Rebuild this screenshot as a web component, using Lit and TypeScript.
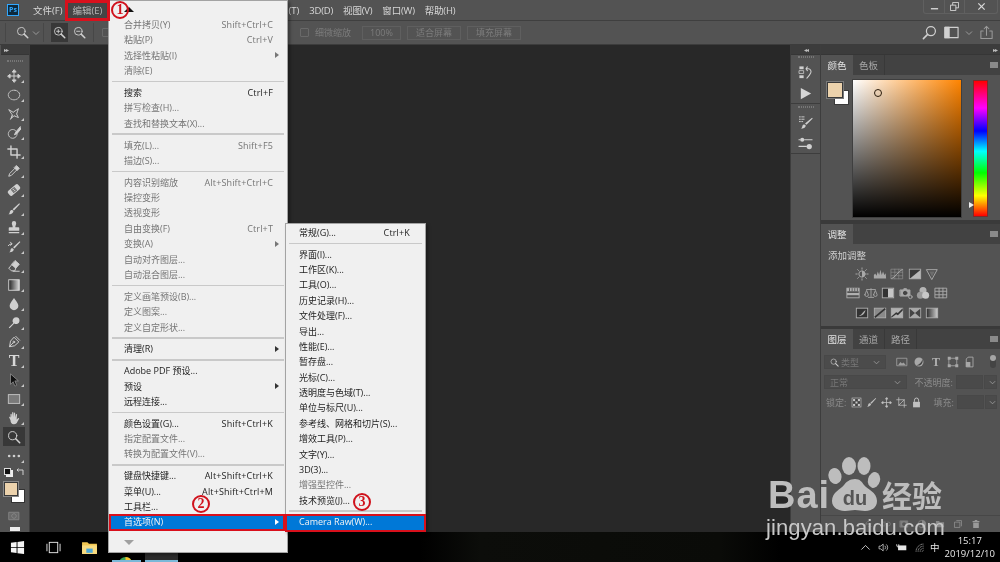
import { LitElement, html, css } from "lit";
import { customElement } from "lit/decorators.js";
import { unsafeSVG } from "lit/directives/unsafe-svg.js";

const s = (inner: string, vb = 16) => `<svg viewBox="0 0 ${vb} ${vb}" width="100%" height="100%" fill="none" stroke="#d0d0d0" stroke-width="1.1" stroke-linecap="round" stroke-linejoin="round">${inner}</svg>`;
const ICONS: Record<string, string> = {
  move: s(`<path d="M8 2v12M2 8h12"/><path fill="#d0d0d0" d="M8 1 6 3.5h4zM8 15l-2-2.5h4zM1 8l2.5-2v4zM15 8l-2.5-2v4z"/>`),
  marquee: s(`<ellipse cx="8" cy="8" rx="6.5" ry="5.5" stroke-dasharray="1.6 1.2"/>`),
  lasso: s(`<path d="M2 3l5 3 6-4-2 6 2 4-5-2-3 3 1-4z" stroke-dasharray="2.5 .8"/><path d="M6 10l-2 4"/>`),
  quick: s(`<circle cx="6.5" cy="9" r="5" stroke-dasharray="1.6 1.1"/><path fill="#d0d0d0" d="M15 1l-5 6-1.5 3 3-1.4 5-6z"/>`),
  crop: s(`<path stroke-width="1.6" d="M4.5 1v10.5H15M1 4.500h10.500V15"/>`),
  dropper: s(`<path fill="#d0d0d0" d="M11 2l3 3-2.500 2.500-3-3z"/><path d="M9 5L3 11l-1 3 3-1 6-6"/>`),
  heal: s(`<g transform="rotate(-40 8 8)"><rect x=".5" y="4.500" width="15" height="7" rx="2" fill="#d0d0d0" stroke="none"/><rect x="5.500" y="5.500" width="5" height="5" fill="#555" stroke="none"/><path d="M7 7h2M7 9h2"/></g>`),
  brush: s(`<path fill="#d0d0d0" stroke="none" d="M14 1.500l.8.8L8 9.800 6.400 8.200zM5.500 9c1.600 0 2.200 1.200 1.600 2.400C6.300 13.300 3.600 14.400 1.600 14c1.400-.9 1.400-2 1.700-3.200C3.600 9.700 4.500 9 5.500 9z"/>`),
  stamp: s(`<path fill="#d0d0d0" stroke="none" d="M5.500 2.500a2.500 2.500 0 0 1 5 0c0 1.800-1 2.500-1 4.500H13a1 1 0 0 1 1 1v3H2V8a1 1 0 0 1 1-1h3.500c0-2-1-2.700-1-4.500zM2 12.500h12V14H2z"/>`),
  hbrush: s(`<path fill="#d0d0d0" stroke="none" d="M14.500 1.500l.8.8L8.500 9.800 7 8.200zM6 9.500c1.500 0 2 1.200 1.500 2.300C6.800 13.400 4.400 14.400 2.500 14c1.300-.8 1.300-1.900 1.600-3C4.400 10.100 5 9.500 6 9.500z"/><path d="M1.500 6.500c1-1.500 2.500-2 4-2M4 2.500l1.800 2-2 1.500" />`),
  eraser: s(`<path fill="#d0d0d0" d="M9.500 2L14 6l-4 4.500L5.500 6.500z"/><path d="M5.500 6.500L2 10.500 5 13.500h4l1-3M7 14h7"/>`),
  grad: `<svg viewBox="0 0 16 16" width="100%" height="100%"><defs><linearGradient id="g1"><stop offset="0" stop-color="#222"/><stop offset="1" stop-color="#d8d8d8"/></linearGradient></defs><rect x="2" y="2" width="12" height="12" fill="url(#g1)" stroke="#ddd"/></svg>`,
  blur: s(`<path fill="#d0d0d0" stroke="none" d="M8 1c2 3 5 6 5 9a5 5 0 0 1-10 0c0-3 3-6 5-9z"/>`),
  smudge: s(`<path fill="#d0d0d0" stroke="none" d="M10.500 1.500a4 4 0 0 1 3.800 4.200 4 4 0 0 1-6 3L3 14l-1-1 5.200-5a4 4 0 0 1 3.300-6.500z"/>`),
  pen: s(`<path d="M3 13l1-6 4-4.500 5.500 5.500L9 12z"/><path d="M3 13l4-4"/><circle cx="7.800" cy="8" r="1"/><path d="M10 1.500l4.500 4.500"/>`),
  arrow: `<svg viewBox="0 0 16 16" width="100%" height="100%"><path d="M4 1v12l3-3 2 5 2-1-2-5h4z" fill="#111" stroke="#aaa" stroke-width=".7"/></svg>`,
  shape: `<svg viewBox="0 0 16 16" width="100%" height="100%"><rect x="1.500" y="3" width="13" height="10" fill="#7a7a7a" stroke="#c8c8c8"/></svg>`,
  hand: s(`<path fill="#d0d0d0" stroke="none" d="M4 8V4c0-1 1.300-1 1.400 0l.3 3 .2-5c0-1 1.400-1 1.400 0l.2 5 .4-4.500c.1-1 1.400-.9 1.400.1L9.500 7.500l.7-3.500c.2-.9 1.400-.7 1.300.2L11 10c1-1.500 2-2.500 2.800-2 .6.400-1.300 3-2.300 5-.7 1.200-1.700 2-3.500 2-3 0-4-2-4-4.500L2.500 7.500c-.3-1 .9-1.400 1.200-.6z"/>`),
  zoom: s(`<circle cx="6.500" cy="6.500" r="4.700"/><path stroke-width="1.800" d="M10 10l4.500 4.500"/>`),
  zoomin: s(`<circle cx="6.500" cy="6.500" r="4.700"/><path stroke-width="1.800" d="M10 10l4.500 4.500"/><path d="M4.500 6.500h4M6.500 4.500v4"/>`),
  zoomout: s(`<circle cx="6.500" cy="6.500" r="4.700"/><path stroke-width="1.800" d="M10 10l4.500 4.500"/><path d="M4.500 6.500h4"/>`),
  dots: `<svg viewBox="0 0 16 16" width="100%" height="100%" fill="#d0d0d0"><circle cx="2.500" cy="8" r="1.500"/><circle cx="8" cy="8" r="1.500"/><circle cx="13.500" cy="8" r="1.500"/></svg>`,
  mask: s(`<rect x="1.500" y="3" width="13" height="10" fill="#6a6a6a" stroke="#8a8a8a"/><circle cx="8" cy="8" r="3" stroke="#8a8a8a" stroke-dasharray="1.200 .8"/>`),
  search2: s(`<circle cx="9.500" cy="6.500" r="4.800" stroke-width="1.300"/><path stroke-width="1.700" d="M6 10l-4.500 4.500"/>`),
  workspace: s(`<rect x="1" y="2.500" width="14" height="11" stroke-width="1.200"/><rect x="1" y="2.500" width="4.500" height="11" fill="#d0d0d0"/>`),
  share: s(`<path d="M4.500 6.500H2v8h12v-8h-2.500" stroke="#9a9a9a"/><path d="M8 11V1.500M5.500 4L8 1.500 10.500 4" stroke="#9a9a9a"/>`),
  hist: s(`<rect x="1.500" y="1.500" width="4.500" height="3" fill="#d0d0d0" stroke="none"/><rect x="1.500" y="6" width="4.500" height="3" stroke-width=".8"/><rect x="1.500" y="11" width="4.500" height="3" fill="#d0d0d0" stroke="none"/><path d="M10 2L8.500 4 10 6M8.500 4h2.500a3 3 0 0 1 2.500 4.500c-.7 1.500-1.500 3-4 5.500"/>`),
  play: `<svg viewBox="0 0 16 16" width="100%" height="100%"><path d="M3 2l11 6-11 6z" fill="#d6d6d6"/></svg>`,
  bpreset: s(`<path fill="#d0d0d0" stroke="none" d="M15 3l.7.8L9 10.500 7.500 9zM6.500 10c1.400 0 2 1 1.500 2.200-.7 1.700-3 2.500-5 2.200 1.300-.8 1.400-1.700 1.700-2.800C5 10.600 5.600 10 6.500 10z"/><path stroke-width="1" d="M1.500 2h1M4 2h2.500M1.500 4.500h1M4 4.500h2.500M1.500 7h1M4 7h1"/>`),
  sliders: s(`<path stroke-width="1.200" d="M7 4h8M1 4h1M1 11h8"/><circle cx="4.500" cy="4" r="2.200" fill="#d0d0d0" stroke="none"/><circle cx="12" cy="11.200" r="2.800" fill="#d0d0d0" stroke="none"/>`),
  sun: s(`<circle cx="8" cy="8" r="3.600" fill="none" stroke="#a8a8a8"/><path fill="#a8a8a8" stroke="none" d="M8 4.400a3.600 3.600 0 0 1 0 7.200z"/><path stroke="#a8a8a8" d="M8 1v1.500M8 13.500V15M1 8h1.500M13.500 8H15M3 3l1 1M12 12l1 1M3 13l1-1M12 4l1-1"/>`),
  levels: `<svg viewBox="0 0 16 16" width="100%" height="100%"><path fill="#a8a8a8" d="M1 13V9l1.500-1.500L4 10l1.500-5 1.500 4L8.500 3 10 9l1.500-4L13 9l1.500-2 .5 6z"/></svg>`,
  curves: s(`<rect x="1.500" y="2.500" width="13" height="11" stroke="#8e8e8e" stroke-width=".8"/><path stroke="#8e8e8e" stroke-width=".7" d="M5.500 2.500v11M10 2.500v11M1.500 6h13M1.500 10h13"/><path stroke="#b0b0b0" d="M2 13C6 12 9 5 14 3"/>`),
  expo: `<svg viewBox="0 0 16 16" width="100%" height="100%"><rect x="1.500" y="2.500" width="13" height="11" fill="#3a3a3a" stroke="#a8a8a8"/><path d="M2 13.500L14.500 3v10.500z" fill="#b8b8b8"/></svg>`,
  vib: s(`<path stroke="#a8a8a8" d="M2 3h12L8 14z"/><path fill="#a8a8a8" stroke="none" d="M5 5h6l-3 6z" opacity=".3"/>`),
  hsl: `<svg viewBox="0 0 16 16" width="100%" height="100%"><rect x="1" y="2.500" width="14" height="11" fill="none" stroke="#b0b0b0"/><path fill="#b0b0b0" d="M1 2.500h14V6H1z"/><path stroke="#555" d="M4 2.500V6M7 2.500V6M10 2.500V6M13 2.500V6"/><rect x="1" y="8" width="14" height="2.500" fill="#b0b0b0"/></svg>`,
  bal: s(`<path stroke="#a8a8a8" stroke-width="1" d="M8 3v9M3 4h10M5 13h6M1 10l2-5 2 5a2 2 0 0 1-4 0zM11 10l2-5 2 5a2 2 0 0 1-4 0z"/>`),
  bw: `<svg viewBox="0 0 16 16" width="100%" height="100%"><rect x="1.500" y="2.500" width="13" height="11" fill="#333" stroke="#b0b0b0"/><rect x="8" y="3" width="6" height="10" fill="#c6c6c6"/></svg>`,
  photo: s(`<path stroke="#a8a8a8" fill="#a8a8a8" d="M1.500 4.500h3l1-1.500h3l1 1.500h3v7h-11z"/><circle cx="7" cy="8" r="2" fill="#444" stroke="#444"/><circle cx="13" cy="12.500" r="2" stroke="#a8a8a8" fill="#555"/>`),
  mixer: `<svg viewBox="0 0 16 16" width="100%" height="100%" fill="#b5b5b5"><circle cx="8" cy="5" r="4"/><circle cx="5" cy="10.500" r="4" fill="#9a9a9a"/><circle cx="11" cy="10.500" r="4" fill="#c8c8c8"/></svg>`,
  lut: s(`<rect x="1.500" y="2.500" width="13" height="11" stroke="#a8a8a8"/><path stroke="#a8a8a8" d="M1.500 6h13M1.500 10h13M5.800 2.500v11M10.200 2.500v11"/>`),
  inv: `<svg viewBox="0 0 16 16" width="100%" height="100%"><rect x="1.500" y="2.500" width="13" height="11" fill="#333" stroke="#b0b0b0"/><path d="M4 11.500c3-.5 4-4 8-7-.5 3.500-3 7-8 7z" fill="#b0b0b0"/></svg>`,
  post: `<svg viewBox="0 0 16 16" width="100%" height="100%"><rect x="1.500" y="2.500" width="13" height="11" fill="#8a8a8a" stroke="#b0b0b0"/><path d="M2 13L14 3" stroke="#333" stroke-width="2"/></svg>`,
  thr: `<svg viewBox="0 0 16 16" width="100%" height="100%"><rect x="1.500" y="2.500" width="13" height="11" fill="#b0b0b0" stroke="#b0b0b0"/><path d="M1.500 13.500L7 9.500l2 1L14.500 5V2.500L9 8 7 7l-5.500 5z" fill="#333"/></svg>`,
  sel: `<svg viewBox="0 0 16 16" width="100%" height="100%"><rect x="1.500" y="2.500" width="13" height="11" fill="#a8a8a8" stroke="#b0b0b0"/><path d="M2 3l6 5-6 5zM14 3L8 8l6 5z" fill="#444"/></svg>`,
  gmap: `<svg viewBox="0 0 16 16" width="100%" height="100%"><defs><linearGradient id="g2"><stop offset="0" stop-color="#2a2a2a"/><stop offset="1" stop-color="#cfcfcf"/></linearGradient></defs><rect x="1.500" y="2.500" width="13" height="11" fill="url(#g2)" stroke="#b0b0b0"/></svg>`,
  fimg: s(`<rect x="1.500" y="3" width="13" height="10" stroke="#a0a0a0"/><path fill="#a0a0a0" stroke="none" d="M3 12l3-4 2 2 2-1.500 3 3.500z"/>`),
  fadj: `<svg viewBox="0 0 16 16" width="100%" height="100%"><circle cx="8" cy="8" r="6" fill="#a8a8a8"/><path d="M4 12.500C8 12 12 8 12.500 4 14 8 12 14 4 12.500z" fill="#444"/></svg>`,
  fshape: s(`<rect x="3" y="3" width="10" height="10" stroke="#a8a8a8"/><g fill="#a8a8a8" stroke="none"><rect x="1" y="1" width="4" height="4"/><rect x="11" y="1" width="4" height="4"/><rect x="1" y="11" width="4" height="4"/><rect x="11" y="11" width="4" height="4"/></g>`),
  fsmart: `<svg viewBox="0 0 16 16" width="100%" height="100%"><path d="M5.500 1.500H12v13H3V4z" fill="none" stroke="#a8a8a8" stroke-width="1.200"/><rect x="2.500" y="8" width="6" height="6.500" fill="#a8a8a8"/></svg>`,
  lockpx: `<svg viewBox="0 0 16 16" width="100%" height="100%"><rect x="1.500" y="1.500" width="13" height="13" fill="#444" stroke="#c0c0c0"/><g fill="#c8c8c8"><rect x="3" y="3" width="3" height="3"/><rect x="10" y="3" width="3" height="3"/><rect x="6.500" y="6.500" width="3" height="3"/><rect x="3" y="10" width="3" height="3"/><rect x="10" y="10" width="3" height="3"/></g></svg>`,
  lockbr: s(`<path fill="#c0c0c0" stroke="none" d="M14 1.500l.8.800L8 9.800 6.400 8.200zM5.500 9c1.600 0 2.200 1.200 1.600 2.400C6.300 13.300 3.600 14.400 1.600 14c1.400-.9 1.400-2 1.700-3.200C3.600 9.700 4.500 9 5.500 9z"/>`),
  lockmv: s(`<path stroke="#c0c0c0" d="M8 2v12M2 8h12"/><path fill="#c0c0c0" stroke="#c0c0c0" d="M8 1 6.500 3h3zM8 15l-1.500-2h3zM1 8l2-1.500v3zM15 8l-2-1.500v3z"/>`),
  lockcr: s(`<path stroke="#c0c0c0" d="M4 1v11h11M1 4h11v11"/><path stroke="#c0c0c0" d="M4 12l8-8"/>`),
  lock: `<svg viewBox="0 0 16 16" width="100%" height="100%"><path d="M5 7V4.500a3 3 0 0 1 6 0V7" fill="none" stroke="#c0c0c0" stroke-width="1.400"/><rect x="3" y="7" width="10" height="8" fill="#c0c0c0"/></svg>`,
  fx: s(`<path stroke="#7f7f7f" d="M3 13c2 0 1.500-9 4-9h2M4 8h4M9 8l4 4M13 8l-4 4"/>`),
  link: s(`<path stroke="#7f7f7f" d="M6 11H4a3 3 0 0 1 0-6h3M10 5h2a3 3 0 0 1 0 6H9M5 8h6"/>`),
  lmask: s(`<rect x="2" y="3" width="12" height="10" fill="#7f7f7f" stroke="#7f7f7f"/><circle cx="8" cy="8" r="3" fill="#555" stroke="none"/>`),
  ladj: `<svg viewBox="0 0 16 16" width="100%" height="100%"><circle cx="8" cy="8" r="6" fill="#555" stroke="#8a8a8a"/><path d="M8 2a6 6 0 0 1 0 12z" fill="#8a8a8a"/></svg>`,
  folder: `<svg viewBox="0 0 16 16" width="100%" height="100%"><path d="M1.500 13V3h5l1.500 2h6.500v8z" fill="#8a8a8a"/></svg>`,
  newl: s(`<path stroke="#9a9a9a" d="M6 2.500h7.500V11M3 5h8v8.500H3z" fill="#555"/>`),
  trash: `<svg viewBox="0 0 16 16" width="100%" height="100%"><path d="M6 1.500h4V3h3.500v2h-11V3H6zM3.500 6h9v8.500h-9z" fill="#9a9a9a"/></svg>`,
  win: `<svg viewBox="0 0 16 16" width="100%" height="100%" fill="#f4f4f4"><path d="M1 3l6-.9v5.500H1zM8 2l7-1v6.600H8zM1 8.400h6v5.500l-6-.9zM8 8.400h7V15l-7-1z"/></svg>`,
  taskview: `<svg viewBox="0 0 16 16" width="100%" height="100%" fill="none" stroke="#e6e6e6" stroke-width="1"><rect x="3.500" y="2.500" width="9" height="11"/><path d="M1 4v8M15 4v8"/></svg>`,
  explorer: `<svg viewBox="0 0 16 16" width="100%" height="100%"><path d="M1 3h5l1.500 1.500H15V14H1z" fill="#f1c651"/><rect x="1" y="6" width="14" height="8" fill="#f8dc82"/><rect x="5" y="9" width="6" height="4" fill="#4ea8d8"/></svg>`,
  caret: `<svg viewBox="0 0 16 16" width="100%" height="100%" fill="none" stroke="#e6e6e6" stroke-width="1.200"><path d="M2 11l6-6 6 6"/></svg>`,
  speaker: `<svg viewBox="0 0 16 16" width="100%" height="100%" fill="none" stroke="#e6e6e6" stroke-width="1"><path d="M1.500 6v4h2.500l3.500 3V3L4 6zM10 5.500a3.500 3.500 0 0 1 0 5M12 3.500a6 6 0 0 1 0 9"/></svg>`,
  battery: `<svg viewBox="0 0 16 16" width="100%" height="100%"><rect x="3" y="5" width="12" height="7" fill="#e6e6e6"/><path d="M1 3v3h3V3M1.500 7h2" stroke="#e6e6e6" fill="none"/></svg>`,
  wifi: `<svg viewBox="0 0 16 16" width="100%" height="100%" fill="none" stroke="#d8d8d8"><path d="M3 14a11 11 0 0 1 11-11M6 14a8 8 0 0 1 8-8M9 14a5 5 0 0 1 5-5M12 14a2 2 0 0 1 2-2" stroke-dasharray="1.500 .7"/></svg>`,
  chrome: `<svg viewBox="0 0 16 16" width="100%" height="100%"><circle cx="8" cy="8" r="7" fill="#3aa757"/><path d="M8 1a7 7 0 0 1 6 3.500H8z" fill="#fbc02d"/><circle cx="8" cy="8" r="3" fill="#4285f4" stroke="#fff"/></svg>`,
};

const icon = (n: string, cls = "") => html`<span class="ic ${cls}">${unsafeSVG(ICONS[n])}</span>`;

type Row = { t?: string; k?: string; off?: boolean; sub?: boolean; sel?: boolean; sep?: boolean };
const d = (t: string, k?: string, sub?: boolean): Row => ({ t, k, sub, off: true });
const e = (t: string, k?: string, sub?: boolean): Row => ({ t, k, sub });
const SEP: Row = { sep: true };

const MENU: Row[] = [
  d("合并拷贝(Y)", "Shift+Ctrl+C"), d("粘贴(P)", "Ctrl+V"), d("选择性粘贴(I)", "", true), d("清除(E)"), SEP,
  e("搜索", "Ctrl+F"), d("拼写检查(H)..."), d("查找和替换文本(X)..."), SEP,
  d("填充(L)...", "Shift+F5"), d("描边(S)..."), SEP,
  d("内容识别缩放", "Alt+Shift+Ctrl+C"), d("操控变形"), d("透视变形"), d("自由变换(F)", "Ctrl+T"), d("变换(A)", "", true), d("自动对齐图层..."), d("自动混合图层..."), SEP,
  d("定义画笔预设(B)..."), d("定义图案..."), d("定义自定形状..."), SEP,
  e("清理(R)", "", true), SEP,
  e("Adobe PDF 预设..."), e("预设", "", true), e("远程连接..."), SEP,
  e("颜色设置(G)...", "Shift+Ctrl+K"), d("指定配置文件..."), d("转换为配置文件(V)..."), SEP,
  e("键盘快捷键...", "Alt+Shift+Ctrl+K"), e("菜单(U)...", "Alt+Shift+Ctrl+M"), e("工具栏..."), { t: "首选项(N)", sub: true, sel: true },
];
const SUB: Row[] = [
  e("常规(G)...", "Ctrl+K"), SEP,
  e("界面(I)..."), e("工作区(K)..."), e("工具(O)..."), e("历史记录(H)..."), e("文件处理(F)..."), e("导出..."), e("性能(E)..."), e("暂存盘..."), e("光标(C)..."),
  e("透明度与色域(T)..."), e("单位与标尺(U)..."), e("参考线、网格和切片(S)..."), e("增效工具(P)..."), e("文字(Y)..."), e("3D(3)..."), d("增强型控件..."), e("技术预览(J)..."), SEP,
  { t: "Camera Raw(W)...", sel: true },
];

const TOOLS = ["move", "marquee", "lasso", "quick", "crop", "dropper", "heal", "brush", "stamp", "hbrush", "eraser", "grad", "blur", "smudge", "pen", "T", "arrow", "shape", "hand", "zoom", "dots"];

@customElement("app-root")
export class AppRoot extends LitElement {
  static styles = css`
    :host { display: block; width: 1000px; height: 562px; overflow: hidden; }
    * { box-sizing: border-box; }
    .app { position: relative; width: 1000px; height: 562px; display: flex; flex-direction: column; background: #535353; overflow: hidden;
      font-family: "Open Sans", "Noto Sans CJK SC", sans-serif; font-size: 9px; color: #d4d4d4; filter: blur(.3px); }
    .ic { display: block; width: 14px; height: 14px; flex: none; }
    .ic svg { display: block; }

    .menubar { height: 20px; flex: none; display: flex; align-items: center; padding-left: 7px; gap: 10px; font-size: 9.5px; color: #d8d8d8; white-space: nowrap; }
    .ps { width: 12px; height: 12px; margin-right: 4px; border: 1px solid #31a8ff; background: #0e2a3d; color: #31a8ff; font-size: 7px; line-height: 10px; text-align: center; font-weight: 700; }
    .mb-gap { width: 166px; flex: none; }
    .mb-r { letter-spacing: -.2px; }
    .controls { position: absolute; top: 0; right: 2px; width: 75px; height: 14px; display: flex; border: 1px solid #606060; border-top: 0; border-radius: 0 0 3px 3px; }
    .controls span { width: 20px; display: flex; align-items: center; justify-content: center; border-left: 1px solid #606060; }
    .controls span:first-child { border-left: 0; }
    .controls span:last-child { width: auto; flex: 1; }
    .controls svg { width: 9px; height: 9px; }

    .optbar { height: 25px; flex: none; display: flex; align-items: center; border-top: 1px solid #3f3f3f; border-bottom: 1px solid #3c3c3c; padding-left: 5px; color: #7c7c7c; }
    .vsep { width: 1px; height: 19px; background: #474747; flex: none; }
    .vsep.after { margin-left: 3px; }
    .opt-search { margin-left: 10px; width: 13px; height: 13px; }
    .chev { margin-left: 3px; width: 8px; height: 8px; }
    .ob-in { width: 17px; height: 19px; background: #383838; display: flex; align-items: center; justify-content: center; margin-left: 7px; }
    .ob-in .ic, .ob-out { width: 13px; height: 13px; }
    .ob-out { margin-left: 5px; margin-right: 7px; }
    .chk { width: 9px; height: 9px; border: 1px solid #696969; border-radius: 1px; flex: none; margin-left: 8px; }
    .chk.far { margin-left: 189px; }
    .optlabel { margin-left: 6px; margin-right: 11px; white-space: nowrap; }
    .obtn { height: 14px; padding: 0 8px; border: 1px solid #5f5f5f; display: flex; align-items: center; margin-right: 6px; white-space: nowrap; }
    .obtn.pc { padding: 0 7px; }
    .optright { margin-left: auto; display: flex; align-items: center; padding-right: 6px; }
    .optright .ic { width: 15px; height: 15px; }
    .optright .ws { margin-left: 7px; }
    .optright .chev { margin: 0 6px 0 6px; width: 8px; height: 8px; }

    .work { flex: 1; min-height: 0; display: flex; }
    .tools { width: 30px; flex: none; padding-left: 1px; display: flex; flex-direction: column; background: #535353; border-right: 1px solid #3d3d3d; }
    .strip { height: 10px; flex: none; background: #3c3c3c; color: #bbb; font-size: 6px; line-height: 10px; padding: 0 3px; letter-spacing: -1px; border-bottom: 1px solid #363636; }
    .grip { height: 11px; flex: none; display: flex; align-items: center; justify-content: center; }
    .grip i { display: block; width: 16px; height: 2px; border-top: 1px dotted #777; border-bottom: 1px dotted #777; }
    .tool { position: relative; height: 19px; flex: none; display: flex; align-items: center; justify-content: center; margin: 0 4px 0 2px; }
    .tool.on { background: #383838; }
    .tool .ic { width: 14px; height: 14px; }
    .tool.corner::after { content: ""; position: absolute; right: 1px; bottom: 2px; border-style: solid; border-width: 0 0 3px 3px; border-color: transparent transparent #c8c8c8 transparent; }
    .typeT { font-family: "Liberation Serif", serif; font-size: 16px; font-weight: 700; line-height: 19px; color: #d8d8d8; }
    .swatchmini { height: 12px; flex: none; display: flex; justify-content: space-between; align-items: flex-start; padding: 3px 5px 0 3px; }
    .mini-a { width: 7px; height: 7px; background: #111; border: 1px solid #ddd; box-shadow: 2px 2px 0 #eee; }
    .mini-b { width: 8px; height: 8px; }
    .fgbg { position: relative; height: 33px; flex: none; }
    .fg { position: absolute; left: 3px; top: 5px; width: 14px; height: 14px; background: #ecd2ac; border: 1px solid #3a3a3a; outline: 1px solid #888; z-index: 1; }
    .bg { position: absolute; left: 10px; top: 12px; width: 14px; height: 14px; background: #fff; border: 1px solid #333; }
    .qm { width: 14px; height: 12px; margin-left: 6px; }
    .scr { width: 10px; height: 4px; background: #eee; margin: 5px 0 0 9px; }

    .canvas { flex: 1; background: #282828; }
    .dock { width: 210px; flex: none; display: flex; }
    .dcol { width: 31px; flex: none; display: flex; flex-direction: column; background: #535353; border-right: 1px solid #3d3d3d; border-left: 1px solid #3d3d3d; }
    .dgroup { padding: 0 0 2px; border-bottom: 1px solid #3d3d3d; margin-bottom: 1px; display: flex; flex-direction: column; align-items: center; gap: 6px; }
    .dgroup .grip { height: 4px; }
    .dgroup .ic { width: 15px; height: 15px; }
    .panels { flex: 1; display: flex; flex-direction: column; min-width: 0; }
    .strip.r { text-align: right; }
    .strip.c { text-align: center; }
    .tabs { height: 20px; flex: none; display: flex; background: #424242; position: relative; }
    .tab { width: 32px; display: flex; align-items: center; justify-content: center; color: #a6a6a6; border-right: 1px solid #393939; font-size: 9.5px; }
    .tab.on { background: #535353; color: #e4e4e4; border-right: 0; }
    .tabmenu { margin-left: auto; margin-right: 2px; align-self: center; width: 8px; height: 6px; background: #8a8a8a; }
    .pdiv { flex: none; background: #3a3a3a; height: 3px; }
    .pdiv.t { height: 4px; }

    .color { height: 145px; flex: none; display: flex; padding-top: 5px; }
    .swcol { position: relative; width: 32px; flex: none; }
    .sw1 { position: absolute; left: 7px; top: 3px; width: 14px; height: 14px; background: #ecd2ac; outline: 1px solid #3a3a3a; z-index: 1; box-shadow: 0 0 0 2px #7a7a7a; }
    .sw2 { position: absolute; left: 14px; top: 11px; width: 13px; height: 13px; background: #fff; box-shadow: 0 0 0 1px #3a3a3a; }
    .sq { position: relative; width: 108px; height: 137px; flex: none; background: linear-gradient(to top, #000, transparent), linear-gradient(to right, #fff, #ff8400); outline: 1px solid #3f3f3f; }
    .picker { position: absolute; left: 21px; top: 9px; width: 8px; height: 8px; border: 1px solid #2a1c0c; border-radius: 50%; }
    .hue { position: relative; width: 15px; height: 137px; flex: none; margin-left: 12px; border: 1px solid #7c2a2a; background: linear-gradient(to bottom, #f00, #f0f 20%, #00f 37%, #0ff 52%, #0f0 68%, #ff0 85%, #f00); }
    .hmark { position: absolute; left: -5px; top: 121px; width: 0; height: 0; border-left: 5px solid #f0f0f0; border-top: 3px solid transparent; border-bottom: 3px solid transparent; }

    .adjust { height: 82px; flex: none; padding: 5px 0 0 7px; }
    .adjtitle { font-size: 9.5px; color: #cfcfcf; line-height: 13px; margin-bottom: 2px; }
    .irow { display: flex; gap: 3.5px; height: 19.5px; align-items: center; }
    .irow.r1 { padding-left: 27px; }
    .irow.r2 { padding-left: 18px; }

    .layers { flex: 1; display: flex; flex-direction: column; min-height: 0; }
    .lrows { flex: 1; padding: 6px 3px 0; display: flex; flex-direction: column; gap: 6px; color: #8a8a8a; }
    .lrow { height: 14px; display: flex; align-items: center; white-space: nowrap; }
    .field { height: 14px; background: #4b4b4b; border: 1px solid #484848; display: flex; align-items: center; padding: 0 5px; color: #777; }
    .field .chev { margin-left: auto; width: 7px; height: 7px; }
    .f-type { width: 62px; }
    .f-type .ic { width: 9px; height: 9px; margin-right: 2px; }
    .ficons { display: flex; gap: 5px; margin-left: 10px; }
    .ficons .ic { width: 12px; height: 12px; }
    .ficons .typeT { font-size: 12px; line-height: 12px; width: 12px; text-align: center; color: #b0b0b0; }
    .toggle { margin-left: auto; margin-right: 1px; width: 6px; height: 12px; position: relative; background: #444; border-radius: 3px; }
    .toggle::before { content: ""; position: absolute; left: 0; top: -1px; width: 6px; height: 6px; border-radius: 50%; background: #a6a6a6; }
    .f-mode { width: 85px; }
    .lbl { margin-left: 7px; margin-right: 3px; }
    .lbl.fill { margin-left: 11px; }
    .f-num { width: 28px; background: #4a4a4a; padding: 0; }
    .f-drop { width: 13px; padding: 0; justify-content: center; margin-left: 1px; }
    .locktx { margin: 0 5px 0 2px; }
    .lockicons { display: flex; gap: 4px; }
    .lockicons .ic { width: 11px; height: 11px; }
    .lbar { height: 17px; flex: none; border-top: 1px solid #474747; display: flex; align-items: center; justify-content: flex-end; gap: 8px; padding-right: 19px; }
    .lbar .ic { width: 10px; height: 10px; }

    .taskbar { height: 30px; flex: none; background: linear-gradient(to right, #000 42%, #0c0d0a 48%, #0a0b08 72%, #000 78%); display: flex; align-items: center; padding-left: 10px; position: relative; color: #e8e8e8; }
    .taskbar > .ic { width: 15px; height: 15px; }
    .tv { margin-left: 21px; }
    .exp { margin-left: 20px; width: 17px !important; height: 17px !important; }
    .tb-chrome { position: absolute; left: 118px; bottom: -9px; width: 14px; height: 14px; }
    .tb-a { position: absolute; left: 112px; bottom: 0; width: 29px; height: 2px; background: #7ab8d8; }
    .tb-b { position: absolute; left: 145px; bottom: 0; width: 33px; height: 10px; background: #2c2c2c; border-bottom: 2px solid #7ab8d8; }
    .tray { margin-left: auto; display: flex; align-items: center; font-size: 9.5px; color: #e8e8e8; padding-right: 5px; }
    .tray .ic { width: 11px; height: 11px; margin-right: 7px; }
    .tray .ic:nth-child(4) { margin-right: 4px; }
    .tray .ime { margin: 0 5px 0 1px; }
    .clock { display: flex; flex-direction: column; align-items: center; line-height: 13px; font-size: 9.5px; }

    /* dropdown menus sit over the workspace */
    .menu { position: absolute; background: #f0f0f0; border: 1px solid #a3a3a3; box-shadow: 2px 2px 3px rgba(0,0,0,.35); color: #1d1d1d; z-index: 5; }
    .main { left: 108px; top: 0; width: 180px; height: 553px; padding: 15.8px 1px 0; }
    .sub { left: 285px; top: 223px; width: 141px; height: 309px; padding: .8px 1px 0; z-index: 6; }
    .topcaret { position: absolute; left: 15px; top: 6px; width: 0; height: 0; border-left: 5px solid transparent; border-right: 5px solid transparent; border-bottom: 5px solid #111; }
    .row { position: relative; height: 15.4px; display: flex; align-items: center; padding: 0 13px 0 14px; white-space: nowrap; }
    .sub .row { padding: 0 14px 0 12px; }
    .row.off { color: #757575; }
    .row.sel { background: #0078d7; color: #f4f4f4; }
    .row .k { margin-left: auto; letter-spacing: .15px; }
    .row .tri { position: absolute; right: 7px; top: 4.5px; width: 0; height: 0; border-left: 4px solid #333; border-top: 3px solid transparent; border-bottom: 3px solid transparent; }
    .row.off .tri { border-left-color: #777; }
    .row.sel .tri { border-left-color: #fff; }
    .sp { height: 6.4px; display: flex; align-items: center; padding: 0 2px; }
    .sub .sp { height: 6.2px; }
    .sp i { display: block; width: 100%; height: 1.5px; background: #c9c9c9; }
    .sp.end i { background: transparent; }
    .more { width: 0; height: 0; border-left: 5px solid transparent; border-right: 5px solid transparent; border-top: 5px solid #a0a0a0; margin: 4px 0 0 14px; }

    /* annotation marks */
    .red { position: absolute; border: 2px solid #d9101c; z-index: 7; }
    .r-edit { left: 65px; top: 0; width: 45px; height: 21px; border-width: 3px; background: rgba(0,0,0,.16); }
    .r-pref { left: 109px; top: 514px; width: 176px; height: 17px; }
    .r-cam { left: 285px; top: 514px; width: 141px; height: 18px; }
    .num { position: absolute; z-index: 8; width: 18px; height: 18px; border: 2px solid #d0121c; border-radius: 50%; color: #d0121c; font: 700 14px/14px "Liberation Serif", serif; text-align: center; }
    .n1 { left: 111px; top: 1px; }
    .n2 { left: 192px; top: 495px; }
    .n3 { left: 353px; top: 493px; }

    /* watermark */
    .wm { position: absolute; left: 766px; top: 460px; width: 184px; height: 82px; z-index: 9; color: #bdbdbd; }
    .bai { position: absolute; left: 2px; top: 15px; font: 700 38px/40px "Liberation Sans", sans-serif; letter-spacing: 1px; }
    .paw { position: absolute; left: 68px; top: 2px; width: 46px; height: 52px; overflow: visible; }
    .jy { position: absolute; left: 116px; top: 16px; font: 700 30px/36px "Noto Sans CJK SC", sans-serif; }
    .url { position: absolute; left: 0; top: 55px; font: 400 22px/26px "Liberation Sans", sans-serif; color: #c8c8c8; letter-spacing: .1px; }
  `;

  private rows(list: Row[]) {
    return list.map((r) => r.sep
      ? html`<div class="sp"><i></i></div>`
      : html`<div class="row ${r.off ? "off" : ""} ${r.sel ? "sel" : ""}"><span>${r.t}</span>${r.k ? html`<span class="k">${r.k}</span>` : ""}${r.sub ? html`<span class="tri"></span>` : ""}</div>`);
  }

  render() {
    const chev = html`<svg class="chev" viewBox="0 0 8 8" fill="none" stroke="#9a9a9a"><path d="M1 2.500l3 3 3-3"/></svg>`;
    const adj = [["sun", "levels", "curves", "expo", "vib"], ["hsl", "bal", "bw", "photo", "mixer", "lut"], ["inv", "post", "thr", "sel", "gmap"]];
    return html`<div class="app">
      <div class="menubar">
        <span class="ps">Ps</span>
        <span>文件(F)</span><span>编辑(E)</span><span class="mb-gap"></span><span>(T)</span>
        ${["3D(D)", "视图(V)", "窗口(W)", "帮助(H)"].map((m) => html`<span class="mb-r">${m}</span>`)}
        <div class="controls">
          <span><svg viewBox="0 0 10 10" stroke="#d8d8d8" stroke-width="1.500"><path d="M1 7.500h8"/></svg></span>
          <span><svg viewBox="0 0 10 10" fill="none" stroke="#d8d8d8"><path d="M.5 3.500h6v6h-6zM3 3.500V.5h6.500v6H6.500"/></svg></span>
          <span><svg viewBox="0 0 10 10" stroke="#d8d8d8" stroke-width="1.400"><path d="M1.500 1.500l7 7M8.500 1.500l-7 7"/></svg></span>
        </div>
      </div>
      <div class="optbar">
        <span class="vsep"></span>
        ${icon("zoom", "opt-search")}${chev}
        <span class="vsep after"></span>
        <span class="ob-in">${icon("zoomin")}</span>
        ${icon("zoomout", "ob-out")}
        <span class="vsep"></span>
        <span class="chk"></span>
        <span class="chk far"></span>
        <span class="optlabel">细微缩放</span>
        <span class="obtn pc">100%</span><span class="obtn">适合屏幕</span><span class="obtn">填充屏幕</span>
        <div class="optright">${icon("search2")}${icon("workspace", "ws")}${chev}${icon("share")}</div>
      </div>
      <div class="work">
        <div class="tools">
          <div class="strip">▸▸</div>
          <div class="grip"><i></i></div>
          ${TOOLS.map((t) => html`<div class="tool ${t === "zoom" ? "on" : "corner"}">${t === "T" ? html`<span class="typeT">T</span>` : icon(t)}</div>`)}
          <div class="swatchmini"><span class="mini-a"></span><svg class="mini-b" viewBox="0 0 8 8" fill="none" stroke="#d0d0d0"><path d="M1 2h6v5M1 2l1.500-1.500M1 2l1.500 1.500"/></svg></div>
          <div class="fgbg"><span class="fg"></span><span class="bg"></span></div>
          ${icon("mask", "qm")}
          <div class="scr"></div>
        </div>
        <div class="canvas"></div>
        <div class="dock">
          <div class="dcol">
            <div class="strip c">◂◂</div>
            <div class="dgroup"><div class="grip"><i></i></div>${icon("hist")}${icon("play")}</div>
            <div class="dgroup"><div class="grip"><i></i></div>${icon("bpreset")}${icon("sliders")}</div>
          </div>
          <div class="panels">
            <div class="strip r">▸▸</div>
            <div class="tabs"><div class="tab on">颜色</div><div class="tab">色板</div><span class="tabmenu"></span></div>
            <div class="color">
              <div class="swcol"><span class="sw1"></span><span class="sw2"></span></div>
              <div class="sq"><span class="picker"></span></div>
              <div class="hue"><span class="hmark"></span></div>
            </div>
            <div class="pdiv t"></div>
            <div class="tabs"><div class="tab on">调整</div><span class="tabmenu"></span></div>
            <div class="adjust">
              <div class="adjtitle">添加调整</div>
              ${adj.map((row, i) => html`<div class="irow ${i === 1 ? "r2" : "r1"}">${row.map((n) => icon(n))}</div>`)}
            </div>
            <div class="pdiv"></div>
            <div class="tabs"><div class="tab on">图层</div><div class="tab">通道</div><div class="tab">路径</div><span class="tabmenu"></span></div>
            <div class="layers">
              <div class="lrows">
                <div class="lrow">
                  <div class="field f-type">${icon("zoom")}<span>类型</span>${chev}</div>
                  <div class="ficons">${["fimg", "fadj"].map((n) => icon(n))}<span class="typeT">T</span>${["fshape", "fsmart"].map((n) => icon(n))}</div>
                  <span class="toggle"></span>
                </div>
                <div class="lrow"><div class="field f-mode"><span>正常</span>${chev}</div><span class="lbl">不透明度:</span><div class="field f-num"></div><div class="field f-drop">${chev}</div></div>
                <div class="lrow"><span class="locktx">锁定:</span><div class="lockicons">${["lockpx", "lockbr", "lockmv", "lockcr", "lock"].map((n) => icon(n))}</div><span class="lbl fill">填充:</span><div class="field f-num"></div><div class="field f-drop">${chev}</div></div>
              </div>
              <div class="lbar">${["fx", "link", "lmask", "ladj", "folder", "newl", "trash"].map((n) => icon(n))}</div>
            </div>
          </div>
        </div>
      </div>
      <div class="taskbar">
        ${icon("win")}${icon("taskview", "tv")}${icon("explorer", "exp")}
        ${icon("chrome", "tb-chrome")}<span class="tb-a"></span><span class="tb-b"></span>
        <div class="tray">${icon("caret")}${icon("speaker")}${icon("battery")}${icon("wifi")}<span class="ime">中</span><div class="clock"><span>15:17</span><span>2019/12/10</span></div></div>
      </div>

      <div class="menu main"><span class="topcaret"></span>${this.rows(MENU)}<div class="sp end"><i></i></div><div class="more"></div></div>
      <div class="menu sub">${this.rows(SUB)}</div>

      <span class="red r-edit"></span><span class="red r-pref"></span><span class="red r-cam"></span>
      <span class="num n1">1</span><span class="num n2">2</span><span class="num n3">3</span>

      <div class="wm">
        <span class="bai">Bai</span>
        <svg class="paw" viewBox="0 0 46 52">
          <g fill="#bdbdbd">
            <ellipse cx="1" cy="14" rx="6.500" ry="8" transform="rotate(-15 1 14)"/>
            <ellipse cx="15" cy="4" rx="7" ry="9"/>
            <ellipse cx="30" cy="4" rx="6.500" ry="9"/>
            <ellipse cx="40" cy="18" rx="6" ry="8" transform="rotate(15 40 18)"/>
            <path d="M21 17c5 0 7 3 9 6 3 4 13 7 13 16 0 7-6 10-12 10-4 0-6-1-10-1s-6 1-10 1c-6 0-13-3-13-10 0-9 9-12 12-16 2-3 6-6 11-6z"/>
          </g>
          <text x="21" y="43" text-anchor="middle" font-family="Liberation Sans, sans-serif" font-weight="700" font-size="20" fill="#555">du</text>
        </svg>
        <span class="jy">经验</span>
        <span class="url">jingyan.baidu.com</span>
      </div>
    </div>`;
  }
}
